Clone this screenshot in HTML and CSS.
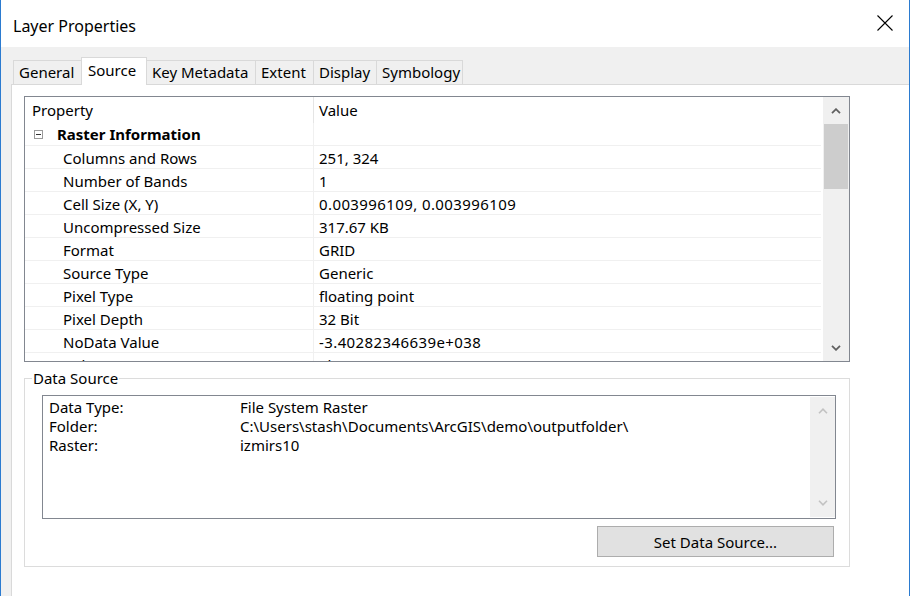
FILE: index.html
```html
<!DOCTYPE html>
<html>
<head>
<meta charset="utf-8">
<title>Layer Properties</title>
<link rel="stylesheet" href="styles.css">
</head>
<body>
<div class="window">
  <div class="titlebar">
    <span class="title">Layer Properties</span>
    <svg class="close" width="16" height="16" viewBox="0 0 16 16"><path d="M0.5 0.5 L15.5 15.5 M15.5 0.5 L0.5 15.5" stroke="#000" stroke-width="1.1" fill="none"/></svg>
  </div>
  <div class="body">
    <div class="tabs">
      <div class="tab t-general">General</div>
      <div class="tab t-source active">Source</div>
      <div class="tab t-key">Key Metadata</div>
      <div class="tab t-extent">Extent</div>
      <div class="tab t-display">Display</div>
      <div class="tab t-symbology">Symbology</div>
    </div>
    <div class="page">
      <div class="grid">
        <div class="grid-list">
          <div class="grid-head"><div class="c1">Property</div><div class="c2">Value</div></div>
          <div class="row group"><div class="c1"><span class="expander"></span>Raster Information</div><div class="c2"></div></div>
          <div class="row"><div class="c1">Columns and Rows</div><div class="c2">251, 324</div></div>
          <div class="row"><div class="c1">Number of Bands</div><div class="c2">1</div></div>
          <div class="row"><div class="c1">Cell Size (X, Y)</div><div class="c2 num">0.003996109, 0.003996109</div></div>
          <div class="row"><div class="c1">Uncompressed Size</div><div class="c2">317.67 KB</div></div>
          <div class="row"><div class="c1">Format</div><div class="c2">GRID</div></div>
          <div class="row"><div class="c1">Source Type</div><div class="c2">Generic</div></div>
          <div class="row"><div class="c1">Pixel Type</div><div class="c2">floating point</div></div>
          <div class="row"><div class="c1">Pixel Depth</div><div class="c2">32 Bit</div></div>
          <div class="row"><div class="c1">NoData Value</div><div class="c2 num">-3.40282346639e+038</div></div>
          <div class="row"><div class="c1">Colormap</div><div class="c2">absent</div></div>
        </div>
        <div class="vscroll">
          <div class="arrow"><svg width="10" height="6" viewBox="0 0 10 6"><path d="M1 5.2 L5 1.2 L9 5.2" stroke="#606060" stroke-width="1.8" fill="none"/></svg></div>
          <div class="thumb"></div>
          <div class="track"></div>
          <div class="arrow"><svg width="10" height="6" viewBox="0 0 10 6"><path d="M1 0.8 L5 4.8 L9 0.8" stroke="#606060" stroke-width="1.8" fill="none"/></svg></div>
        </div>
      </div>
      <fieldset class="ds">
        <legend>Data Source</legend>
        <div class="textbox">
          <div class="tb-content">
            <div class="kv"><span class="k">Data Type:</span><span>File System Raster</span></div>
            <div class="kv"><span class="k">Folder:</span><span>C:\Users\stash\Documents\ArcGIS\demo\outputfolder\</span></div>
            <div class="kv"><span class="k">Raster:</span><span>izmirs10</span></div>
          </div>
          <div class="tb-scroll">
            <div class="arrow"><svg width="10" height="6" viewBox="0 0 10 6"><path d="M1 5.2 L5 1.2 L9 5.2" stroke="#c2c2c2" stroke-width="1.6" fill="none"/></svg></div>
            <div class="arrow"><svg width="10" height="6" viewBox="0 0 10 6"><path d="M1 0.8 L5 4.8 L9 0.8" stroke="#c2c2c2" stroke-width="1.6" fill="none"/></svg></div>
          </div>
        </div>
        <div class="btn-row"><button class="btn">Set Data Source...</button></div>
      </fieldset>
    </div>
  </div>
</div>
</body>
</html>
```
FILE: styles.css
```css
html, body {
  margin: 0;
  padding: 0;
  background: #ffffff;
}
body {
  width: 912px;
  height: 596px;
  overflow: hidden;
  font-family: "Noto Sans", "Open Sans", sans-serif;
  font-size: 15px;
  color: #000;
}
.window {
  width: 910px;
  height: 596px;
  box-sizing: border-box;
  border-left: 1px solid #2b7bd0;
  border-right: 1px solid #2b7bd0;
  display: flex;
  flex-direction: column;
}
.titlebar {
  height: 47px;
  flex: none;
  display: flex;
  align-items: center;
  padding: 2px 16px 0 12px;
  box-sizing: border-box;
  background: #fff;
}
.title {
  flex: 1;
  font-size: 16px;
  line-height: 20px;
  padding-top: 2px;
}
.close {
  display: block;
  margin-top: -3px;
}
.body {
  flex: 1;
  background: #f0f0f0;
  display: flex;
  flex-direction: column;
}
.tabs {
  height: 37px;
  flex: none;
  display: flex;
  align-items: flex-end;
  padding-left: 12px;
  box-sizing: border-box;
}
.tab {
  height: 24px;
  box-sizing: border-box;
  border: 1px solid #d9d9d9;
  border-bottom: none;
  background: #f0f0f0;
  padding-left: 5px;
  line-height: 23px;
  margin-left: -1px;
  white-space: nowrap;
}
.tab.t-general { width: 69px; margin-left: 0; }
.tab.t-source { width: 66px; }
.tab.t-key { width: 110px; }
.tab.t-extent { width: 59px; }
.tab.t-display { width: 64px; }
.tab.t-symbology { width: 87px; }
.tab.active {
  height: 28px;
  background: #fff;
  margin-bottom: -1px;
  position: relative;
  z-index: 1;
  line-height: 24px;
  padding-left: 6px;
}
.page {
  flex: 1;
  background: #fff;
  border-top: 1px solid #d9d9d9;
  border-left: 1px solid #d9d9d9;
  margin-left: 10px;
  padding: 11px 0 0 12px;
}
.grid {
  width: 826px;
  height: 266px;
  box-sizing: border-box;
  border: 1px solid #828790;
  display: flex;
}
.grid-list {
  flex: 1;
  overflow: hidden;
  padding-right: 2px;
}
.grid-head, .row {
  display: grid;
  grid-template-columns: 289px 1fr;
}
.grid-head {
  height: 26px;
  line-height: 26px;
}
.grid-head .c1 {
  padding-left: 7px;
  border-right: 1px solid #e5e5e5;
}
.grid-head .c2 {
  padding-left: 5px;
}
.row {
  height: 23px;
  box-sizing: border-box;
  border-bottom: 1px solid #f0f0f0;
  line-height: 22px;
}
.row .c1 {
  padding-left: 38px;
  padding-top: 1px;
  border-right: 1px solid #f0f0f0;
  white-space: nowrap;
}
.row .c2 {
  padding-left: 5px;
  padding-top: 1px;
  white-space: nowrap;
}
.row .c2.num {
  letter-spacing: 0.4px;
}
.row.group .c1 {
  padding-left: 9px;
  padding-top: 0;
  font-weight: bold;
  display: flex;
  align-items: center;
}
.expander {
  width: 9px;
  height: 9px;
  box-sizing: border-box;
  border: 1px solid #9a9a9a;
  margin-right: 14px;
  position: relative;
  flex: none;
}
.expander::after {
  content: "";
  position: absolute;
  left: 1px;
  top: 3px;
  width: 5px;
  height: 1px;
  background: #333;
}
.vscroll {
  width: 26px;
  flex: none;
  background: #f0f0f0;
  display: flex;
  flex-direction: column;
}
.vscroll .arrow {
  height: 27px;
  display: flex;
  align-items: center;
  justify-content: center;
}
.vscroll .thumb {
  height: 65px;
  margin: 0 1px;
  background: #cdcdcd;
}
.vscroll .track {
  flex: 1;
}
.ds {
  width: 826px;
  box-sizing: border-box;
  margin: 6px 0 0 0;
  padding: 0 0 9px 0;
  border: 1px solid #dcdcdc;
  min-width: 0;
}
.ds legend {
  padding: 0 1px;
  margin-left: 7px;
  line-height: 20px;
}
.textbox {
  margin: 7px 13px 0 17px;
  height: 124px;
  box-sizing: border-box;
  border: 1px solid #828790;
  display: flex;
}
.tb-content {
  flex: 1;
  padding: 2px 0 0 6px;
}
.kv {
  display: flex;
  line-height: 19px;
  white-space: nowrap;
}
.kv .k {
  width: 191px;
  flex: none;
}
.tb-scroll {
  width: 25px;
  margin: 1px 0;
  background: #f0f0f0;
  display: flex;
  flex-direction: column;
  justify-content: space-between;
}
.tb-scroll .arrow {
  height: 28px;
  display: flex;
  align-items: center;
  justify-content: center;
}
.btn-row {
  display: flex;
  justify-content: flex-end;
  padding-right: 15px;
  margin-top: 7px;
}
.btn {
  width: 237px;
  height: 31px;
  box-sizing: border-box;
  background: #e1e1e1;
  border: 1px solid #adadad;
  font-family: "Noto Sans", "Open Sans", sans-serif;
  font-size: 15px;
  color: #000;
  padding: 0;
  line-height: 28px;
}
```
